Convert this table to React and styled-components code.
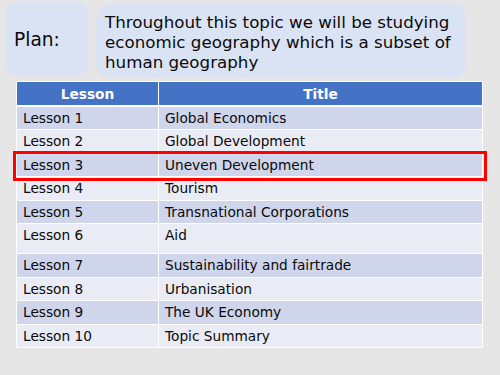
import React from "react";
import styled, { createGlobalStyle } from "styled-components";

const lessons = [
  ["Lesson 1", "Global Economics"],
  ["Lesson 2", "Global Development"],
  ["Lesson 3", "Uneven Development"],
  ["Lesson 4", "Tourism"],
  ["Lesson 5", "Transnational Corporations"],
  ["Lesson 6", "Aid", 30],
  ["Lesson 7", "Sustainability and fairtrade", 23.5],
  ["Lesson 8", "Urbanisation", 23.5],
  ["Lesson 9", "The UK Economy", 23.5],
  ["Lesson 10", "Topic Summary", 23.5],
];

const GlobalStyle = createGlobalStyle`
  html, body {
    margin: 0;
    padding: 0;
    background: #e6e6e6;
  }
  body {
    font-family: "DejaVu Sans", "Liberation Sans", sans-serif;
    color: #0a0a0a;
  }
`;

const Slide = styled.div`
  width: 500px;
  height: 375px;
  box-sizing: border-box;
  padding: 2px 0 0 0;
  overflow: hidden;
`;

const Top = styled.div`
  display: flex;
  align-items: flex-start;
  gap: 8px;
  padding-left: 5px;
`;

const PlanBox = styled.div`
  width: 83px;
  height: 74px;
  border-radius: 12px;
  background: #dae3f3;
  display: flex;
  align-items: center;
  padding-left: 9px;
  box-sizing: border-box;
  font-size: 18.6px;
`;

const IntroBox = styled.div`
  margin-top: 2px;
  width: 370px;
  height: 74px;
  border-radius: 14px;
  background: #dae3f3;
  box-sizing: border-box;
  padding: 8px 0 0 9px;
  font-size: 16.7px;
  line-height: 20px;
`;

const TableWrap = styled.div`
  position: relative;
  margin: 3px 0 0 16px;
  width: 467px;
`;

const Table = styled.table`
  width: 100%;
  border-collapse: collapse;
  table-layout: fixed;
  font-size: 13.7px;
`;

const Head = styled.th`
  background: #4472c4;
  color: #ffffff;
  font-weight: bold;
  height: 23px;
  padding: 0;
  border: 1px solid #ffffff;
  border-bottom-width: 2px;
  text-align: center;
  vertical-align: middle;
`;

const Cell = styled.td`
  background: ${(p) => (p.$odd ? "#cfd5ea" : "#e9ebf5")};
  height: ${(p) => p.$h}px;
  padding: 3px 0 0 6px;
  box-sizing: border-box;
  border: 1px solid #ffffff;
  vertical-align: top;
  line-height: 17px;
`;

const Highlight = styled.div`
  position: absolute;
  left: -3px;
  top: 70px;
  width: 474px;
  height: 30px;
  box-sizing: border-box;
  border: 3px solid #ff0000;
  pointer-events: none;
`;

export default function App() {
  return (
    <Slide>
      <GlobalStyle />
      <Top>
        <PlanBox>Plan:</PlanBox>
        <IntroBox>
          Throughout this topic we will be studying economic geography which
          is a subset of human geography
        </IntroBox>
      </Top>
      <TableWrap>
        <Table>
          <colgroup>
            <col style={{ width: "142px" }} />
            <col />
          </colgroup>
          <thead>
            <tr>
              <Head>Lesson</Head>
              <Head>Title</Head>
            </tr>
          </thead>
          <tbody>
            {lessons.map(([num, title, h], i) => (
              <tr key={num}>
                <Cell $odd={i % 2 === 0} $h={h || 23.6}>
                  {num}
                </Cell>
                <Cell $odd={i % 2 === 0} $h={h || 23.6}>
                  {title}
                </Cell>
              </tr>
            ))}
          </tbody>
        </Table>
        <Highlight />
      </TableWrap>
    </Slide>
  );
}
